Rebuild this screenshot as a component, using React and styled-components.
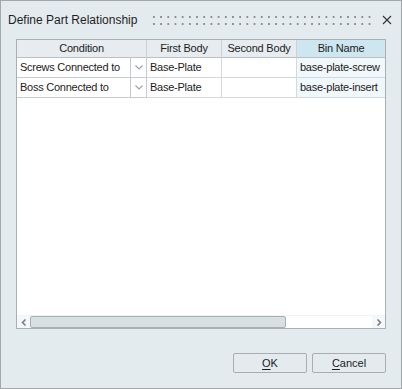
import { styled, createGlobalStyle } from 'styled-components';

const GlobalStyle = createGlobalStyle`
  body {
    margin: 0;
    font-family: "Liberation Sans", Arial, sans-serif;
    color: #1c1c1c;
  }
`;

const rows = [
  { condition: 'Screws Connected to', first: 'Base-Plate', second: '', bin: 'base-plate-screw' },
  { condition: 'Boss Connected to', first: 'Base-Plate', second: '', bin: 'base-plate-insert' },
];

export default function App() {
  return (
    <>
      <GlobalStyle />
      <Dialog>
        <TitleBar>
          <Title>Define Part Relationship</Title>
          <Grip />
          <Close>
            <svg width="10" height="10" viewBox="0 0 10 10">
              <path d="M1 1 L9 9 M9 1 L1 9" stroke="#333" strokeWidth="1.1" fill="none" />
            </svg>
          </Close>
        </TitleBar>
        <Frame>
          <GridRow>
            <HeadCell>Condition</HeadCell>
            <HeadCell>First Body</HeadCell>
            <HeadCell>Second Body</HeadCell>
            <HeadCell $active>Bin Name</HeadCell>
          </GridRow>
          {rows.map((r) => (
            <GridRow key={r.bin}>
              <ComboCell>
                <ComboText>{r.condition}</ComboText>
                <ComboArrow>
                  <svg width="8" height="5" viewBox="0 0 8 5">
                    <path d="M0.5 0.5 L4 4 L7.5 0.5" stroke="#9aa0a4" strokeWidth="1.1" fill="none" />
                  </svg>
                </ComboArrow>
              </ComboCell>
              <Cell>{r.first}</Cell>
              <Cell>{r.second}</Cell>
              <Cell $active>{r.bin}</Cell>
            </GridRow>
          ))}
          <Filler />
          <ScrollBar>
            <ScrollArrow>
              <svg width="6" height="7" viewBox="0 0 6 7">
                <path d="M4.5 0.5 L1.5 3.5 L4.5 6.5" stroke="#7b8187" strokeWidth="1.6" fill="none" />
              </svg>
            </ScrollArrow>
            <Track>
              <Thumb />
            </Track>
            <ScrollArrow>
              <svg width="6" height="7" viewBox="0 0 6 7">
                <path d="M1.5 0.5 L4.5 3.5 L1.5 6.5" stroke="#7b8187" strokeWidth="1.6" fill="none" />
              </svg>
            </ScrollArrow>
          </ScrollBar>
        </Frame>
        <ButtonBar>
          <Button><u>O</u>K</Button>
          <Button><u>C</u>ancel</Button>
        </ButtonBar>
      </Dialog>
    </>
  );
}

const Dialog = styled.div`
  width: 402px;
  height: 389px;
  box-sizing: border-box;
  border: 1px solid #a2a7ab;
  background: #e4ebef;
  display: flex;
  flex-direction: column;
`;
const TitleBar = styled.div`
  height: 38px;
  display: flex;
  align-items: center;
  padding: 0 9px 0 7px;
`;
const Title = styled.div`
  font-size: 12px;
  color: #1e1e1e;
`;
const Grip = styled.div`
  flex: 1;
  height: 9px;
  margin: 0 8px 0 16px;
  background-image: radial-gradient(circle at 1px 1px, #8a8f93 0.9px, transparent 1.1px);
  background-size: 7.2px 7px;
`;
const Close = styled.div`
  width: 10px;
  height: 10px;
  display: flex;
`;
const Frame = styled.div`
  margin: 0 15px;
  height: 290px;
  box-sizing: border-box;
  border: 1px solid #a9afb3;
  background: #fff;
  display: flex;
  flex-direction: column;
`;
const GridRow = styled.div`
  display: grid;
  grid-template-columns: 130px 75px 75px 88px;
`;
const HeadCell = styled.div`
  height: 17px;
  border-right: 1px solid #ccd3d7;
  border-bottom: 1px solid #b9c1c5;
  background: ${(p) => (p.$active ? '#cde6ef' : '#e6ecef')};
  font-size: 11px;
  letter-spacing: -0.2px;
  line-height: 17px;
  text-align: center;
  &:last-child {
    border-right: none;
  }
`;
const Cell = styled.div`
  height: 19px;
  border-right: 1px solid #d3d9dc;
  border-bottom: 1px solid #d3d9dc;
  background: ${(p) => (p.$active ? '#f1f8fb' : '#fff')};
  font-size: 11px;
  letter-spacing: -0.25px;
  line-height: 19px;
  padding-left: 3px;
  white-space: nowrap;
  overflow: hidden;
  &:last-child {
    border-right: none;
  }
`;
const ComboCell = styled.div`
  height: 19px;
  display: flex;
  border-right: 1px solid #c4cbcf;
  border-bottom: 1px solid #c4cbcf;
`;
const ComboText = styled.div`
  flex: 1;
  font-size: 11px;
  letter-spacing: -0.25px;
  line-height: 19px;
  padding-left: 3px;
  white-space: nowrap;
`;
const ComboArrow = styled.div`
  width: 15px;
  border-left: 1px solid #c4cbcf;
  display: flex;
  align-items: center;
  justify-content: center;
`;
const Filler = styled.div`
  flex: 1;
`;
const ScrollBar = styled.div`
  height: 12px;
  display: flex;
  background: #fff;
  border-top: 1px solid #eef4f7;
`;
const ScrollArrow = styled.div`
  width: 13px;
  display: flex;
  align-items: center;
  justify-content: center;
  background: #f4f8fa;
`;
const Track = styled.div`
  flex: 1;
  display: flex;
`;
const Thumb = styled.div`
  width: 256px;
  box-sizing: border-box;
  border: 1px solid #a8b0b4;
  border-radius: 2px;
  background: #d9e0e3;
`;
const ButtonBar = styled.div`
  margin-top: 24px;
  padding-right: 15px;
  display: flex;
  justify-content: flex-end;
  gap: 5px;
`;
const Button = styled.button`
  width: 74px;
  height: 20px;
  padding: 0;
  border: 1px solid #a9adb1;
  border-radius: 2px;
  background: #e4ebef;
  font-family: "Liberation Sans", Arial, sans-serif;
  font-size: 11px;
  color: #1c1c1c;
  u {
    text-underline-offset: 2px;
  }
`;
